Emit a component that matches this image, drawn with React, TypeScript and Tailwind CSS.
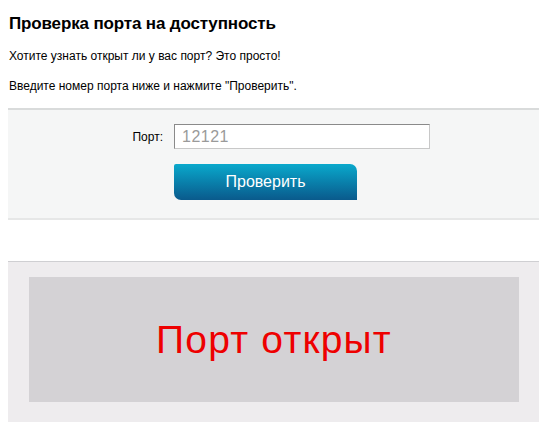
export default function App() {
  return (
    <div className="min-h-screen bg-white font-['Liberation_Sans',Arial,sans-serif] text-black">
      <div className="ml-2 w-[531px]">
        <h1 className="ml-px mt-[13px] text-[17px] font-bold leading-[22px] tracking-[-0.15px]">Проверка порта на доступность</h1>
        <p className="ml-px mt-[13px] text-[12px] leading-4">Хотите узнать открыт ли у вас порт? Это просто!</p>
        <p className="ml-px mt-[14px] text-[12px] leading-4">Введите номер порта ниже и нажмите "Проверить".</p>

        {/* Form panel */}
        <div className="mt-[14px] border-t-2 border-b-2 border-t-[#d9dbdb] border-b-[#e6e7e7] bg-[#f5f6f6] pt-[14px] pb-[18px]">
          <div className="flex items-center">
            <label className="w-[166px] pr-[11px] text-right text-[12px]">Порт:</label>
            <input
              defaultValue="12121"
              className="h-[25px] w-[256px] border border-t-[#8a8a8a] border-l-[#8a8a8a] border-r-[#c8c8c8] border-b-[#c8c8c8] bg-white px-[7px] text-[16px] tracking-[0.5px] text-[#9a9a9a] outline-none"
            />
          </div>
          <div className="mt-[15px] flex">
            <div className="w-[166px]" />
            <button className="h-9 w-[183px] rounded-tl-[2px] rounded-tr-[7px] rounded-bl-[7px] bg-gradient-to-b from-[#0aa9cc] to-[#0a5a8c] text-[16px] text-white">
              Проверить
            </button>
          </div>
        </div>

        {/* Result panel */}
        <div className="mt-[41px] border-t border-[#cfcfd2] bg-[#eeecee] pt-[15px] pr-5 pb-5 pl-[21px]">
          <div className="flex h-[125px] items-center justify-center bg-[#d4d2d5]">
            <span className="text-[39px] leading-none tracking-[1.2px] text-[#ee0000]">Порт открыт</span>
          </div>
        </div>
      </div>
    </div>
  );
}
